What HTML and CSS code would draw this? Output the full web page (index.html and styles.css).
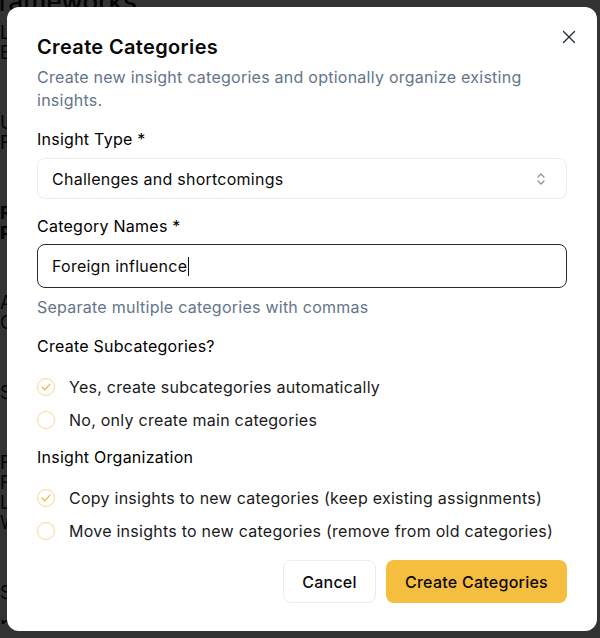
FILE: index.html
```html
<!DOCTYPE html>
<html lang="en">
<head>
    <meta charset="UTF-8">
    <meta name="viewport" content="width=device-width, initial-scale=1.0">
    <title>Create Categories</title>
    <link rel="stylesheet" href="styles.css">
</head>
<body>
    <div class="page">
        <h2 class="page-title">Frameworks</h2>
        <div class="rows">
            <div class="row">Labour law</div>
            <div class="row">Employment</div>
            <div class="row gap">Unions</div>
            <div class="row">Fair pay</div>
            <div class="row gap bold">Rights</div>
            <div class="row bold">Protection</div>
            <div class="row gap">Agreements</div>
            <div class="row">Contracts</div>
            <div class="row gap">Safety</div>
            <div class="row gap">Fixed term</div>
            <div class="row">Flexible work</div>
            <div class="row">Leave</div>
            <div class="row">Working time</div>
            <div class="row gap">Social security</div>
        </div>
        <div class="last-row">
            <span>post-employment rules</span>
            <span class="country">Hungary</span>
        </div>
    </div>

    <div class="overlay"></div>

    <div class="dialog">
        <button class="close-btn" aria-label="Close">
            <svg width="14" height="14" viewBox="0 0 14 14"><path d="M1.5 1.5l11 11M12.5 1.5l-11 11" stroke="#1f2937" stroke-width="1.3" fill="none" stroke-linecap="round"/></svg>
        </button>

        <h1 class="dialog-title">Create Categories</h1>
        <p class="dialog-desc">Create new insight categories and optionally organize existing insights.</p>

        <div class="field">
            <label class="label">Insight Type *</label>
            <div class="select">
                <span>Challenges and shortcomings</span>
                <svg width="10" height="14" viewBox="0 0 10 14"><path d="M2 5l3-3 3 3M2 9l3 3 3-3" stroke="#8a8f98" stroke-width="1.2" fill="none" stroke-linecap="round" stroke-linejoin="round"/></svg>
            </div>
        </div>

        <div class="field">
            <label class="label">Category Names *</label>
            <div class="input">Foreign influence<span class="caret"></span></div>
            <p class="help">Separate multiple categories with commas</p>
        </div>

        <div class="group">
            <div class="label">Create Subcategories?</div>
            <div class="options">
                <div class="option">
                    <span class="radio checked">
                        <svg width="10" height="8" viewBox="0 0 10 8"><path d="M1 4l2.8 2.8L9 1.2" stroke="#f0b132" stroke-width="1.1" fill="none" stroke-linecap="round" stroke-linejoin="round"/></svg>
                    </span>
                    Yes, create subcategories automatically
                </div>
                <div class="option"><span class="radio"></span>No, only create main categories</div>
            </div>
        </div>

        <div class="group">
            <div class="label">Insight Organization</div>
            <div class="options">
                <div class="option">
                    <span class="radio checked">
                        <svg width="10" height="8" viewBox="0 0 10 8"><path d="M1 4l2.8 2.8L9 1.2" stroke="#f0b132" stroke-width="1.1" fill="none" stroke-linecap="round" stroke-linejoin="round"/></svg>
                    </span>
                    Copy insights to new categories (keep existing assignments)
                </div>
                <div class="option"><span class="radio"></span>Move insights to new categories (remove from old categories)</div>
            </div>
        </div>

        <div class="actions">
            <button class="btn btn-outline">Cancel</button>
            <button class="btn btn-primary">Create Categories</button>
        </div>
    </div>
</body>
</html>
```

FILE: styles.css
```css
* {
    box-sizing: border-box;
}

body {
    margin: 0;
    font-family: Inter, "Noto Sans", sans-serif;
    background-color: #ffffff;
    color: #0a0a0a;
    overflow: hidden;
}

/* page behind the modal */
.page {
    height: 638px;
    font-size: 22px;
    color: #111;
}

.page-title {
    margin: -14px 0 0 -16px;
    font-size: 26px;
    font-weight: 500;
}

.rows {
    padding-top: 6px;
}

.row {
    line-height: 20px;
    font-size: 18px;
}

.row.gap {
    margin-top: 50px;
}

.row.bold {
    font-weight: 700;
}

.last-row {
    display: flex;
    margin-top: 8px;
    font-size: 22px;
}

.country {
    margin-left: 110px;
}

.overlay {
    position: fixed;
    inset: 0;
    background-color: rgba(0, 0, 0, 0.8);
}

/* modal */
.dialog {
    position: fixed;
    left: 7px;
    top: 7px;
    width: 590px;
    height: 624px;
    background-color: #ffffff;
    border-radius: 12px;
    padding: 26px 30px 28px 30px;
    display: flex;
    flex-direction: column;
    letter-spacing: 0.25px;
}

.close-btn {
    position: absolute;
    top: 20px;
    right: 18px;
    width: 20px;
    height: 20px;
    padding: 0;
    border: none;
    background: none;
    display: flex;
    align-items: center;
    justify-content: center;
}

.dialog-title {
    margin: 0;
    font-size: 20px;
    line-height: 28px;
    font-weight: 600;
    letter-spacing: 0.35px;
}

.dialog-desc {
    margin: 5px 0 0 0;
    font-size: 16px;
    line-height: 23px;
    color: #64748b;
}

.field {
    margin-top: 15px;
    display: flex;
    flex-direction: column;
}

.field + .field {
    margin-top: 15px;
}

.label {
    font-size: 16px;
    line-height: 24px;
    font-weight: 400;
    color: #000;
}

.select {
    margin-top: 7px;
    height: 41px;
    border: 1px solid #ececec;
    border-radius: 8px;
    padding: 0 20px 0 14px;
    display: flex;
    align-items: center;
    justify-content: space-between;
    font-size: 16px;
}

.input {
    margin-top: 6px;
    height: 44px;
    border: 1.5px solid #2a2a2a;
    border-radius: 8px;
    padding: 0 14px;
    display: flex;
    align-items: center;
    font-size: 16px;
}

.caret {
    display: inline-block;
    width: 1px;
    height: 19px;
    background-color: #111;
    margin-left: 1px;
}

.help {
    margin: 7px 0 0 0;
    font-size: 16px;
    line-height: 24px;
    color: #64748b;
}

.group {
    margin-top: 15px;
}

.group + .group {
    margin-top: 13px;
}

.options {
    margin-top: 17px;
    display: flex;
    flex-direction: column;
    gap: 9px;
}

.option {
    display: flex;
    align-items: center;
    gap: 14px;
    font-size: 16px;
    line-height: 24px;
    color: #1a1a1a;
}

.radio {
    width: 18px;
    height: 18px;
    border: 1px solid #f6d98f;
    border-radius: 50%;
    display: flex;
    align-items: center;
    justify-content: center;
    flex-shrink: 0;
}

.actions {
    margin-top: auto;
    display: flex;
    justify-content: flex-end;
    gap: 10px;
}

.btn {
    height: 43px;
    border-radius: 8px;
    font-family: Inter, "Noto Sans", sans-serif;
    font-size: 16px;
    font-weight: 500;
    letter-spacing: 0.25px;
    color: #0a0a0a;
    cursor: pointer;
}

.btn-outline {
    width: 93px;
    background-color: #ffffff;
    border: 1px solid #ececec;
}

.btn-primary {
    width: 181px;
    background-color: #f5be3f;
    border: none;
}
```
